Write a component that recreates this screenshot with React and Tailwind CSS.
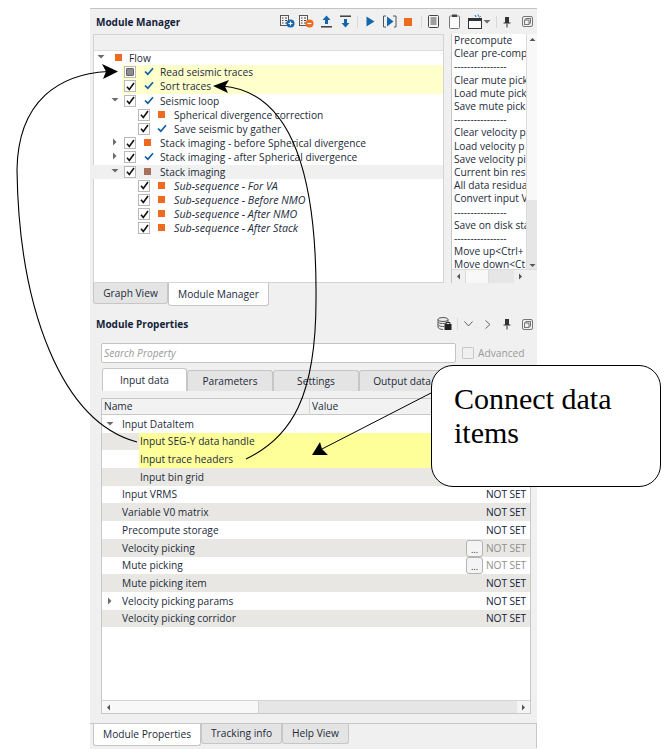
import React from "react";

const treeRows = [
  { label: "Flow", arrow: "down", arrowAt: 8, mark: "orange", markAt: 22, textAt: 36 },
  { label: "Read seismic traces", box: "gray", boxAt: 31, mark: "check", markAt: 51, textAt: 67, hl: true },
  { label: "Sort traces", box: "on", boxAt: 31, mark: "check", markAt: 51, textAt: 67, hl: true },
  { label: "Seismic loop", arrow: "down", arrowAt: 22, box: "on", boxAt: 31, mark: "check", markAt: 51, textAt: 67 },
  { label: "Spherical divergence correction", box: "on", boxAt: 45, mark: "orange", markAt: 65, textAt: 81 },
  { label: "Save seismic by gather", box: "on", boxAt: 45, mark: "check", markAt: 64, textAt: 81 },
  { label: "Stack imaging - before Spherical divergence", arrow: "right", arrowAt: 22, box: "on", boxAt: 31, mark: "orange", markAt: 51, textAt: 67 },
  { label: "Stack imaging - after Spherical divergence", arrow: "right", arrowAt: 22, box: "on", boxAt: 31, mark: "check", markAt: 51, textAt: 67 },
  { label: "Stack imaging", arrow: "down", arrowAt: 22, box: "on", boxAt: 31, mark: "brown", markAt: 51, textAt: 67, sel: true },
  { label: "Sub-sequence - For VA", box: "on", boxAt: 45, mark: "orange", markAt: 65, textAt: 81, it: true },
  { label: "Sub-sequence - Before NMO", box: "on", boxAt: 45, mark: "orange", markAt: 65, textAt: 81, it: true },
  { label: "Sub-sequence - After NMO", box: "on", boxAt: 45, mark: "orange", markAt: 65, textAt: 81, it: true },
  { label: "Sub-sequence - After Stack", box: "on", boxAt: 45, mark: "orange", markAt: 65, textAt: 81, it: true },
];

// the list is cut by its scrollbar in the picture, so only the visible part is written
const menuItems = [
  "Precompute", "Clear pre-comp", "----------------", "Clear mute pick", "Load mute pick", "Save mute pick",
  "----------------", "Clear velocity p", "Load velocity p", "Save velocity pi", "Current bin resi",
  "All data residua", "Convert input V", "----------------", "Save on disk sta", "----------------",
  "Move up<Ctrl+", "Move down<Ct",
];

const propRows = [
  { label: "Input DataItem", arrow: "down", pad: 21 },
  { label: "Input SEG-Y data handle", pad: 39, gray: true, hl: true },
  { label: "Input trace headers", pad: 39, hl: true },
  { label: "Input bin grid", pad: 39, gray: true },
  { label: "Input VRMS", pad: 21, value: "NOT SET" },
  { label: "Variable V0 matrix", pad: 21, gray: true, value: "NOT SET" },
  { label: "Precompute storage", pad: 21, value: "NOT SET" },
  { label: "Velocity picking", pad: 21, gray: true, value: "NOT SET", pick: true },
  { label: "Mute picking", pad: 21, value: "NOT SET", pick: true },
  { label: "Mute picking item", pad: 21, gray: true, value: "NOT SET" },
  { label: "Velocity picking params", arrow: "right", pad: 21, value: "NOT SET" },
  { label: "Velocity picking corridor", pad: 21, gray: true, value: "NOT SET" },
];

const Tri = ({ dir, className = "" }) => (
  <svg width="8" height="8" viewBox="0 0 8 8" className={className}>
    {dir === "down" ? <path d="M0.5 2 L7.5 2 L4 5.5 Z" fill="#6b6b6b" /> : <path d="M2 0.5 L2 7.5 L5.5 4 Z" fill="#6b6b6b" />}
  </svg>
);

const BlueCheck = ({ className = "" }) => (
  <svg width="10" height="9" viewBox="0 0 10 9" className={className}>
    <path d="M1 4.5 L3.8 7.2 L9 1.2" fill="none" stroke="#0f5fa8" strokeWidth="1.7" />
  </svg>
);

const Checkbox = ({ state }) => (
  <span className="flex h-[12px] w-[12px] items-center justify-center border border-[#b9b9b9] bg-white">
    {state === "gray" && <span className="h-[8px] w-[8px] rounded-[1px] border border-[#666] bg-[#8c8c8c]" />}
    {state === "on" && (
      <svg width="9" height="9" viewBox="0 0 9 9">
        <path d="M1 4.8 L3.3 7.5 L8 1" fill="none" stroke="#111" strokeWidth="1.6" />
      </svg>
    )}
  </span>
);

const Mark = ({ kind, left }) => {
  const pos = { left: `${left}px` };
  if (kind === "check") return <span className="absolute top-[2px]" style={pos}><BlueCheck /></span>;
  const color = kind === "brown" ? "bg-[#a9705a]" : "bg-[#ee6a1f]";
  return <span className={`absolute top-[3px] h-[7px] w-[7px] ${color}`} style={pos} />;
};

const TreeRow = ({ row }) => (
  <div className={`relative -ml-px h-[14.2px] leading-[15px] text-[#1c2b3a] ${row.it ? "text-[10.7px]" : "text-[10.2px]"} ${row.sel ? "bg-[#f0f0f0]" : ""}`}>
    {row.hl && <span className="absolute inset-y-0 left-[29px] right-0 bg-[#ffffcc]" />}
    {row.arrow && <span className="absolute top-[2px]" style={{ left: `${row.arrowAt - 4}px` }}><Tri dir={row.arrow} /></span>}
    {row.box && <span className="absolute top-[1px]" style={{ left: `${row.boxAt}px` }}><Checkbox state={row.box} /></span>}
    <Mark kind={row.mark} left={row.markAt} />
    <span className={`absolute whitespace-nowrap ${row.it ? "italic" : ""}`} style={{ left: `${row.textAt}px` }}>{row.label}</span>
  </div>
);

const PinIcon = () => (
  <svg width="10" height="12" viewBox="0 0 10 12">
    <path d="M3 1 H7 V6.5 H8.5 V7.5 H1.5 V6.5 H3 Z" fill="#333" />
    <path d="M5 7.5 V11.5" stroke="#333" strokeWidth="1" />
  </svg>
);

const RestoreIcon = () => (
  <svg width="11" height="11" viewBox="0 0 11 11">
    <rect x="0.5" y="0.5" width="10" height="10" rx="1.5" fill="none" stroke="#777" />
    <rect x="4" y="2.5" width="4.5" height="4.5" fill="none" stroke="#777" />
    <rect x="2.5" y="4" width="4.5" height="4.5" fill="#f0f0f0" stroke="#777" />
  </svg>
);

const Sep = () => <span className="block h-[12px] w-px bg-[#d8d8d8]" />;

const GridDoc = ({ badge }) => (
  <svg width="15" height="13" viewBox="0 0 15 13">
    <rect x="0.5" y="0.5" width="8" height="10" fill="#f4f4f4" stroke="#555" />
    <path d="M2 3 H3.5 M5 3 H7 M2 5.5 H3.5 M5 5.5 H7 M2 8 H3.5 M5 8 H7" stroke="#444" />
    <circle cx="10.5" cy="8.5" r="4" fill={badge === "plus" ? "#1267ad" : "#ee6a1f"} />
    <path d={badge === "plus" ? "M8.5 8.5 H12.5 M10.5 6.5 V10.5" : "M8.5 8.5 H12.5"} stroke="#fff" strokeWidth="1.2" />
  </svg>
);

const ManagerToolbar = () => (
  <div className="flex h-[25px] items-center pl-[188px]">
    <span className="flex w-[18px] justify-center"><GridDoc badge="plus" /></span>
    <span className="flex w-[20px] justify-center"><GridDoc badge="minus" /></span>
    <span className="flex w-[20px] justify-center">
      <svg width="13" height="13" viewBox="0 0 13 13">
        <path d="M6.5 0.5 L10.5 5 H8 V9 H5 V5 H2.5 Z" fill="#1267ad" />
        <path d="M1 11.8 H12" stroke="#333" strokeWidth="1.4" />
      </svg>
    </span>
    <span className="flex w-[18px] justify-center">
      <svg width="13" height="13" viewBox="0 0 13 13">
        <path d="M1 1.2 H12" stroke="#333" strokeWidth="1.4" />
        <path d="M6.5 12.5 L10.5 8 H8 V4 H5 V8 H2.5 Z" fill="#1267ad" />
      </svg>
    </span>
    <span className="ml-[3px] mr-[3px]"><Sep /></span>
    <span className="flex w-[18px] justify-center">
      <svg width="9" height="11" viewBox="0 0 9 11"><path d="M0.5 0.5 L8.5 5.5 L0.5 10.5 Z" fill="#1267ad" /></svg>
    </span>
    <span className="flex w-[22px] justify-center">
      <svg width="14" height="13" viewBox="0 0 14 13">
        <path d="M3 1 H0.5 V12 H3 M10 1 H13 V12 H11" fill="none" stroke="#555" />
        <path d="M4 1.5 L10.5 6.5 L4 11.5 Z" fill="#1267ad" />
      </svg>
    </span>
    <span className="flex w-[14px] justify-center"><span className="h-[8px] w-[8px] bg-[#ee6a1f]" /></span>
    <span className="ml-[6px] mr-[1px]"><Sep /></span>
    <span className="flex w-[20px] justify-center">
      <svg width="13" height="14" viewBox="0 0 13 14">
        <rect x="1.5" y="0.5" width="10" height="12" rx="1" fill="#f5f5f5" stroke="#444" />
        <path d="M3.5 3 H9.5 M3.5 5 H9.5 M3.5 7 H9.5 M3.5 9 H9.5" stroke="#444" />
      </svg>
    </span>
    <span className="flex w-[22px] justify-center">
      <svg width="11" height="15" viewBox="0 0 11 15">
        <rect x="0.5" y="2" width="10" height="12.5" rx="1" fill="#fbfbfb" stroke="#777" />
        <rect x="3" y="0.5" width="5" height="2.5" fill="#444" />
      </svg>
    </span>
    <span className="flex w-[20px] justify-center">
      <svg width="14" height="15" viewBox="0 0 14 15">
        <path d="M7 1 L8 3 M10 0.5 L10.5 2.5 M12.5 2 L11.5 3.5" stroke="#1267ad" />
        <rect x="0.5" y="4.5" width="13" height="10" fill="#fbfbfb" stroke="#333" />
        <rect x="0.5" y="4.5" width="13" height="2.5" fill="#333" />
      </svg>
    </span>
    <Tri dir="down" className="-ml-[2px]" />
    <span className="ml-[5px] mr-[2px]"><Sep /></span>
    <span className="flex w-[16px] justify-center"><PinIcon /></span>
    <span className="ml-[4px] flex w-[16px] justify-center"><RestoreIcon /></span>
  </div>
);

const PropsToolbar = () => (
  <div className="flex h-[22px] items-center justify-between pl-[6px] pr-[2px]">
    <span className="pt-[1px] text-[10px] font-bold text-[#14233a]">Module Properties</span>
    <span className="flex items-center">
      <svg width="15" height="14" viewBox="0 0 15 14">
        <ellipse cx="6" cy="2.5" rx="5" ry="2" fill="#eee" stroke="#555" />
        <path d="M1 2.5 V10 C1 11.5 4 12.5 6 12.5 M11 2.5 V6 M1 5 C2 7 9 7 11 5 M1 7.5 C2 9.5 5 9.5 7 9.5" fill="none" stroke="#555" />
        <rect x="7.5" y="7" width="7" height="6" fill="#222" />
        <path d="M9 7 V5.5 H13 V7" fill="none" stroke="#222" />
      </svg>
      <span className="ml-[5px] mr-[6px]"><Sep /></span>
      <svg width="9" height="6" viewBox="0 0 9 6"><path d="M0.5 0.5 L4.5 5 L8.5 0.5" fill="none" stroke="#666" /></svg>
      <svg width="6" height="9" viewBox="0 0 6 9" className="ml-[12px]"><path d="M0.5 0.5 L5 4.5 L0.5 8.5" fill="none" stroke="#666" /></svg>
      <span className="ml-[8px] flex w-[16px] justify-center"><PinIcon /></span>
      <span className="ml-[4px] flex w-[16px] justify-center"><RestoreIcon /></span>
    </span>
  </div>
);

const Tab = ({ label, active, width, bottom }) => (
  <div
    className={`flex items-center justify-center whitespace-nowrap border border-[#c6c6c6] pt-[1px] text-[10.2px] text-[#1c2b3a] ${width} ${
      active ? "bg-white" : "bg-[#e4e4e4]"
    } ${bottom ? "rounded-b-[3px] border-t-0" : "rounded-t-[3px] border-b-0"}`}
  >
    {label}
  </div>
);

const ScrollArrow = ({ dir }) => (
  <svg width="7" height="7" viewBox="0 0 7 7">
    {dir === "up" && <path d="M0.5 5 H6.5 L3.5 2 Z" fill="#555" />}
    {dir === "down" && <path d="M0.5 2 H6.5 L3.5 5 Z" fill="#555" />}
    {dir === "left" && <path d="M5 0.5 V6.5 L2 3.5 Z" fill="#555" />}
    {dir === "right" && <path d="M2 0.5 V6.5 L5 3.5 Z" fill="#555" />}
  </svg>
);

const ModuleManager = () => (
  <section className="flex flex-col">
    <div className="relative">
      <span className="absolute left-[6px] top-[6px] text-[10px] font-bold text-[#14233a]">Module Manager</span>
      <ManagerToolbar />
    </div>
    <div className="flex h-[249px] pl-[3px]">
      <div className="w-[351px] border border-[#d4d4d4] bg-white">
        <div className="h-[16px] border-b border-[#dcdcdc] bg-[#f0f0f0]" />
        <div>
          {treeRows.map((row) => <TreeRow key={row.label} row={row} />)}
        </div>
      </div>
      <div className="ml-[7px] flex min-w-0 flex-1 flex-col border-l border-[#c8c8c8] bg-white">
        <div className="flex min-h-0 flex-1">
          <div className="w-[75px] overflow-hidden pl-[2px] text-[10.2px] leading-[13.2px] text-[#1c2b3a]">
            {menuItems.map((item, i) => <div key={i} className="whitespace-nowrap">{item}</div>)}
          </div>
          <div className="flex w-[11px] flex-col items-center border-l border-[#dcdcdc] bg-[#e6e6e6]">
            <div className="flex h-[166px] w-full flex-col items-center bg-[#f8f8f8] pt-[2px]"><ScrollArrow dir="up" /></div>
            <div className="flex-1" />
            <ScrollArrow dir="down" />
          </div>
        </div>
        <div className="flex h-[14px] items-center border-t border-[#dcdcdc] bg-[#f0f0f0] pl-[3px]">
          <ScrollArrow dir="left" />
          <span className="ml-[3px] h-full w-[24px] border-x border-[#dcdcdc] bg-[#f8f8f8]" />
          <span className="h-full w-[25px] bg-[#e6e6e6]" />
          <span className="ml-[3px]"><ScrollArrow dir="right" /></span>
        </div>
      </div>
    </div>
    <div className="flex h-[23px] items-start pl-[3px]">
      <Tab label="Graph View" width="w-[75px] h-[21px]" bottom />
      <Tab label="Module Manager" width="w-[101px] h-[23px]" active bottom />
    </div>
  </section>
);

const PropRow = ({ row }) => (
  <div className={`relative flex h-[17.7px] items-center pt-[1px] text-[10.2px] text-[#1c2b3a] ${row.gray ? "bg-[#e9e7e3]" : "bg-white"}`}>
    {row.hl && <span className="absolute inset-y-0 left-[37px] right-0 bg-[#ffff99]" />}
    {row.arrow && <span className="absolute left-[4px] top-[5px]"><Tri dir={row.arrow} /></span>}
    <span className="relative whitespace-nowrap" style={{ paddingLeft: `${row.pad - 1}px` }}>{row.label}</span>
    {row.value && (
      <span className="relative ml-auto flex items-center pr-[4px]">
        {row.pick && (
          <span className="mr-[3px] flex h-[17px] w-[17px] items-end justify-center rounded-[3px] border border-[#b4b4b4] bg-[#f4f4f4] pb-[1px] text-[9px] leading-[10px]">...</span>
        )}
        <span className={`tracking-[-0.1px] ${row.pick ? "text-[#8f8f8f]" : "text-[#14233a]"}`}>{row.value}</span>
      </span>
    )}
  </div>
);

const ModuleProperties = () => (
  <section className="mt-[7px] flex flex-1 flex-col">
    <PropsToolbar />
    <div className="ml-[11px] mt-[8px] flex items-center">
      <div className="flex h-[20px] w-[355px] items-center rounded-[2px] border border-[#c4c4c4] bg-white pl-[2px] pt-[1px] text-[10.2px] italic text-[#9a9a9a]">Search Property</div>
      <span className="ml-[6px] h-[12px] w-[12px] rounded-[1px] border border-[#c8c8c8] bg-[#f0f0f0]" />
      <span className="ml-[4px] pt-[1px] text-[10.2px] text-[#9a9a9a]">Advanced</span>
    </div>
    <div className="ml-[12px] mt-[5px] flex h-[23px] items-end">
      <Tab label="Input data" width="w-[85px] h-[23px]" active />
      <Tab label="Parameters" width="w-[86px] h-[21px]" />
      <Tab label="Settings" width="w-[86px] h-[21px]" />
      <Tab label="Output data" width="w-[86px] h-[21px]" />
    </div>
    <div className="ml-[11px] mt-[7px] flex h-[316px] w-[430px] flex-col border border-[#c8c8c8] bg-white">
      <div className="flex h-[16px] shrink-0 items-center border-b border-[#c8c8c8] bg-[#f2f2f2] pt-[1px] text-[10.2px] text-[#1c2b3a]">
        <span className="w-[208px] border-r border-[#d4d4d4] pl-[2px]">Name</span>
        <span className="pl-[2px]">Value</span>
      </div>
      <div className="flex-1">
        {propRows.map((row) => <PropRow key={row.label} row={row} />)}
      </div>
      <div className="flex h-[13px] shrink-0 items-center border-t border-[#d4d4d4] bg-[#e6e6e6]">
        <span className="flex h-full w-[13px] items-center justify-center bg-[#f8f8f8]"><ScrollArrow dir="left" /></span>
        <span className="h-full w-[144px] border-r border-[#d4d4d4] bg-[#f8f8f8]" />
        <span className="ml-auto flex h-full w-[13px] items-center justify-center bg-[#f4f4f4]"><ScrollArrow dir="right" /></span>
      </div>
    </div>
    <div className="mt-[9px] flex h-[25px] border-t border-r border-[#c8c8c8] pl-[3px]">
      <Tab label="Module Properties" width="w-[108px] h-[22px]" active bottom />
      <Tab label="Tracking info" width="w-[81px] h-[20px]" bottom />
      <Tab label="Help View" width="w-[67px] h-[20px]" bottom />
    </div>
  </section>
);

const Arrows = () => (
  <svg className="absolute inset-0" width="668" height="749" viewBox="0 0 668 749" fill="none">
    <path d="M137 442 C 62 422, 19 310, 17 170 C 18 100, 60 74, 108 71.5" stroke="#000" strokeWidth="1.1" />
    <path d="M118 71.5 L102 64 L106 71.5 L103 79 Z" fill="#000" />
    <path d="M246 459 C 292 437, 316 396, 316 300 C 317 195, 300 92, 222 86" stroke="#000" strokeWidth="1.1" />
    <path d="M213 86 L229 80 L225 86.5 L228 93 Z" fill="#000" />
    <path d="M431 393 L322 449" stroke="#000" strokeWidth="1" />
    <path d="M312 455 L320 442 L322 449 L328 455 Z" fill="#000" />
  </svg>
);

const Callout = () => (
  <div className="absolute left-[431px] top-[365px] h-[122px] w-[230px] rounded-[22px] border border-black bg-white pl-[22px] pt-[16px] font-['Liberation_Serif',serif] text-[30px] leading-[34px] text-black">
    Connect data<br />items
  </div>
);

export default function App() {
  return (
    <div className="relative h-[749px] w-[668px] overflow-hidden bg-white font-['Open_Sans',sans-serif]">
      <div className="ml-[90px] flex h-[741px] w-[447px] translate-y-[8px] flex-col border-t border-[#c4c4c4] bg-[#f0f0f0]">
        <ModuleManager />
        <ModuleProperties />
      </div>
      <Arrows />
      <Callout />
    </div>
  );
}
